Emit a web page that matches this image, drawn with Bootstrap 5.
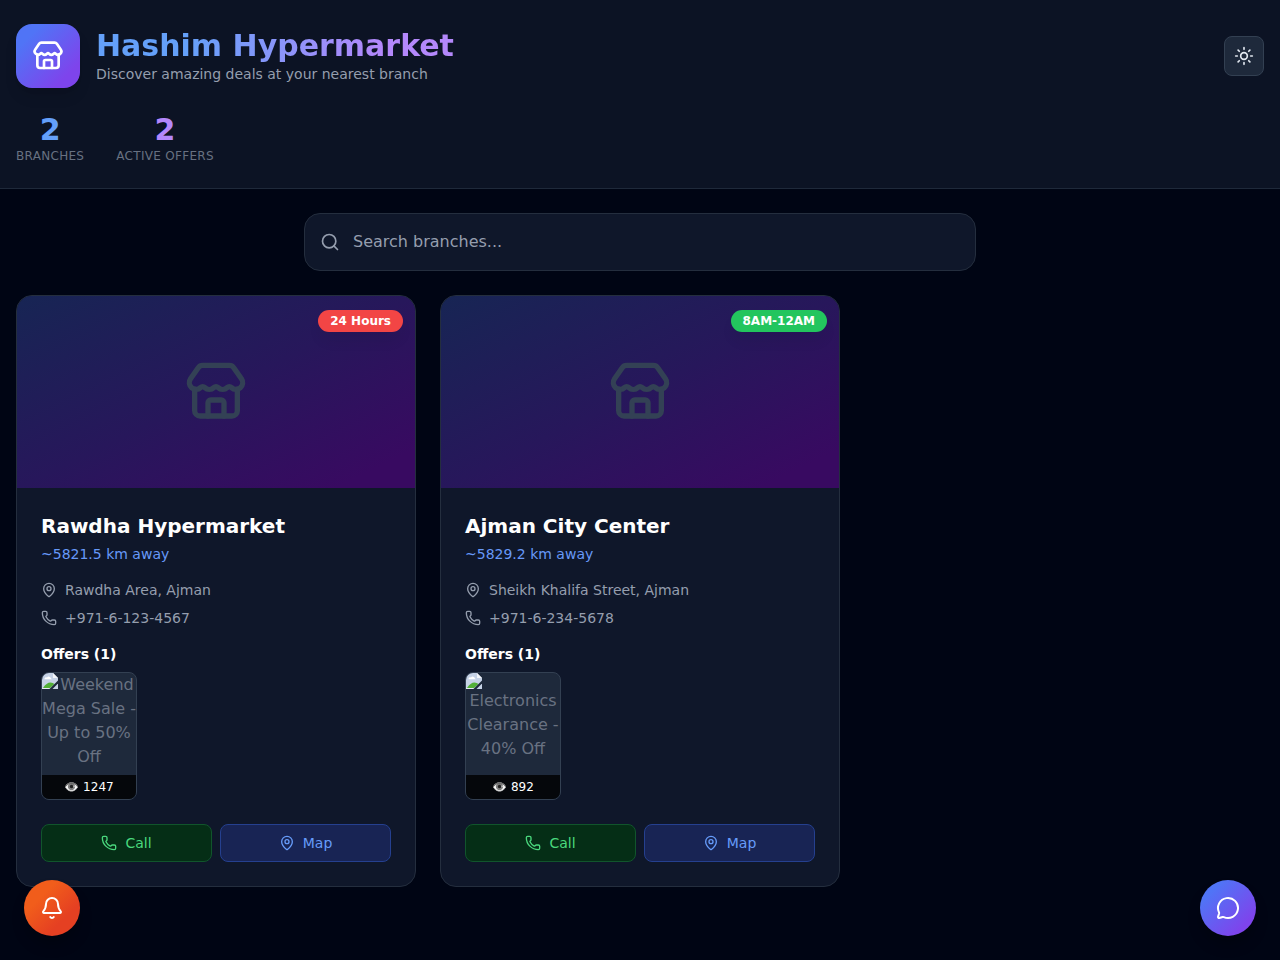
<!DOCTYPE html>
<html lang="en" data-bs-theme="dark">
<head>
<meta charset="utf-8">
<meta name="viewport" content="width=device-width, initial-scale=1">
<title>Hashim Hypermarket</title>
<link href="https://cdn.jsdelivr.net/npm/bootstrap@5.3.0/dist/css/bootstrap.min.css" rel="stylesheet">
<style>
body{font-family:"DejaVu Sans","Noto Color Emoji",sans-serif;background:#000514;color:#fff;line-height:1.5;min-height:100vh}
svg{display:block;flex:none;fill:none;stroke:currentColor;stroke-width:2;stroke-linecap:round;stroke-linejoin:round}
.i16{width:16px;height:16px}.i20{width:20px;height:20px}.i24{width:24px;height:24px}.i32{width:32px;height:32px}.i64{width:64px;height:64px}
.site-head{background:#0c1324;border-bottom:1px solid #1f293a}
.logo{width:64px;height:64px;border-radius:16px;background:linear-gradient(135deg,#5074f6 20%,#7e44ec 80%);box-shadow:0 10px 15px -3px rgba(0,0,0,.12),0 4px 6px -4px rgba(0,0,0,.12)}
.brand-name{font-size:30px;line-height:36px;font-weight:700;background:linear-gradient(90deg,#64a0f9 25%,#b488fb 80%);-webkit-background-clip:text;background-clip:text;color:transparent}
.t14{font-size:14px;line-height:20px}
.t12{font-size:12px;line-height:16px}
.muted{color:#959eae}
.theme-btn{width:40px;height:40px;border-radius:8px;background:#1e293b;border:1px solid #334052;color:#e2e8f0}
.stat-num{font-size:30px;line-height:36px;font-weight:700}
.stat-branches{color:#649ffa}.stat-offers{color:#b488fc}
.stat-label{letter-spacing:.3px;color:#687181}
.search-box{max-width:672px;height:58px;border-radius:16px;background:#0f172a;border:1px solid #242e3e;color:#959eae}
.search-box svg{margin-left:-1px;margin-right:13px}
.search-box input,.search-box input:focus{background:none;border:0;box-shadow:none;padding:0;color:#fff;font-size:16px}
.search-box input::placeholder{color:#959eae;opacity:1}
.branch-grid{display:grid;grid-template-columns:repeat(3,1fr);gap:24px}
.branch{background:#0f172a;border:1px solid #242e3e;border-radius:16px;overflow:hidden;color:#fff}
.banner{height:192px;background:linear-gradient(to bottom right,#172554,#27175b 50%,#380a61 90%);color:#334155}
.hours{top:14px;right:12px;font-size:12px;line-height:16px;padding:3px 12px;border-radius:11px;font-weight:700;color:#fff;box-shadow:0 10px 15px -3px rgba(0,0,0,.08)}
.open-all{background:#f24545}.open-day{background:#23c55e}
.branch-name{font-size:20px;line-height:28px;font-weight:700}
.distance{color:#6799f8}
.offer{width:96px;height:128px;border-radius:8px;background:#1e293b;border:1px solid #334052;color:#697282}
.offer-alt{font-size:16px;line-height:24px;height:102px}
.views{background:#05070b;color:#fff;padding:4px 0;height:24px}
.eye{filter:grayscale(1)}
.act{flex:1 1 0;height:38px;border-radius:8px;border:1px solid}
.act-call{background:#052e16;border-color:#11552c;color:#4ad87d}
.act-map{background:#182454;border-color:#25408f;color:#669bf9}
.fab{width:56px;height:56px;bottom:24px;color:#fff;box-shadow:0 10px 15px -3px rgba(0,0,0,.3)}
.fab-bell{left:24px;background:linear-gradient(135deg,#f15d1b 30%,#e54022 70%)}
.fab-chat{right:24px;background:linear-gradient(135deg,#5074f6 20%,#7e44ec 80%)}
</style>
</head>
<body>
<svg width="0" height="0" class="d-none">
  <symbol id="store" viewBox="0 0 24 24"><path d="M15 21v-5a1 1 0 0 0-1-1h-4a1 1 0 0 0-1 1v5"/><path d="M17.774 10.31a1.12 1.12 0 0 0-1.549 0 2.5 2.5 0 0 1-3.451 0 1.12 1.12 0 0 0-1.548 0 2.5 2.5 0 0 1-3.452 0 1.12 1.12 0 0 0-1.549 0 2.5 2.5 0 0 1-3.77-3.248l2.889-4.184A2 2 0 0 1 7 2h10a2 2 0 0 1 1.653.873l2.895 4.192a2.5 2.5 0 0 1-3.774 3.244"/><path d="M4 10.95V19a2 2 0 0 0 2 2h12a2 2 0 0 0 2-2v-8.05"/></symbol>
  <symbol id="pin" viewBox="0 0 24 24"><path d="M20 10c0 4.993-5.539 10.193-7.399 11.799a1 1 0 0 1-1.202 0C9.539 20.193 4 14.993 4 10a8 8 0 0 1 16 0"/><circle cx="12" cy="10" r="3"/></symbol>
  <symbol id="phone" viewBox="0 0 24 24"><path d="M13.832 16.568a1 1 0 0 0 1.213-.303l.355-.465A2 2 0 0 1 17 15h3a2 2 0 0 1 2 2v3a2 2 0 0 1-2 2A18 18 0 0 1 2 4a2 2 0 0 1 2-2h3a2 2 0 0 1 2 2v3a2 2 0 0 1-.8 1.6l-.468.351a1 1 0 0 0-.292 1.233 14 14 0 0 0 6.392 6.384"/></symbol>
  <symbol id="broken" viewBox="0 0 16 16"><g stroke="none"><path d="M0 0h11l5 5v11H0z" fill="#c6d2e6"/><path d="M2.500 6a1.700 1.700 0 0 1 2.500-1.600 2.200 2.200 0 0 1 3.900 1q.8.1.8.900H2.500z" fill="#fff"/><path d="M1 15q3.500-5.500 7.500-5.500 2.500 0 4 1.500L8 15z" fill="#52b037"/><path d="M0 15h8l-1 1H0z" fill="#e6ecf5"/><path d="M16 7.500v3L10.500 16H7.500z" fill="#1e293b"/><path d="M11 0l5 5h-5z" fill="#f4f6fa"/></g></symbol>
</svg>

<header class="site-head px-3 py-4">
  <div class="d-flex align-items-center justify-content-between">
    <div class="d-flex align-items-center gap-3">
      <div class="logo d-flex align-items-center justify-content-center"><svg class="i32"><use href="#store"/></svg></div>
      <div>
        <h1 class="brand-name mb-0">Hashim Hypermarket</h1>
        <p class="t14 muted mb-0">Discover amazing deals at your nearest branch</p>
      </div>
    </div>
    <button class="theme-btn d-flex align-items-center justify-content-center p-0" aria-label="Toggle theme">
      <svg class="i20" viewBox="0 0 24 24"><circle cx="12" cy="12" r="4"/><path d="M12 2v2M12 20v2M4.930 4.930l1.410 1.410M17.660 17.660l1.410 1.410M2 12h2M20 12h2M6.340 17.660l-1.410 1.410M19.070 4.930l-1.410 1.410"/></svg>
    </button>
  </div>
  <div class="d-flex mt-4 text-center">
    <div class="me-3"><div class="stat-num stat-branches">2</div><div class="t12 stat-label text-uppercase">Branches</div></div>
    <div class="ms-3"><div class="stat-num stat-offers">2</div><div class="t12 stat-label text-uppercase">Active Offers</div></div>
  </div>
</header>

<main class="px-3 py-4">
  <div class="search-box d-flex align-items-center mx-auto mb-4 px-3">
    <svg class="i20" viewBox="0 0 24 24"><path d="m21 21-4.340-4.340"/><circle cx="11" cy="11" r="8"/></svg>
    <input class="form-control" type="text" placeholder="Search branches...">
  </div>

  <div class="branch-grid">
    <article class="branch">
      <div class="banner position-relative d-flex align-items-center justify-content-center">
        <svg class="i64"><use href="#store"/></svg>
        <span class="hours open-all position-absolute">24 Hours</span>
      </div>
      <div class="p-4">
        <h2 class="branch-name mb-1">Rawdha Hypermarket</h2>
        <p class="t14 distance mb-3">~5821.5 km away</p>
        <div class="t14 muted d-flex align-items-center gap-2 mb-2"><svg class="i16"><use href="#pin"/></svg>Rawdha Area, Ajman</div>
        <div class="t14 muted d-flex align-items-center gap-2 mb-3"><svg class="i16"><use href="#phone"/></svg>+971-6-123-4567</div>
        <h3 class="t14 fw-bold mb-2">Offers (1)</h3>
        <div class="offer overflow-hidden mb-4 text-center">
          <div class="offer-alt"><svg class="i16 float-start"><use href="#broken"/></svg>Weekend Mega Sale - Up to 50% Off</div>
          <div class="views t12"><span class="eye">👁️</span> 1247</div>
        </div>
        <div class="d-flex gap-2">
          <a class="btn act act-call t14 p-0 d-flex align-items-center justify-content-center gap-2"><svg class="i16"><use href="#phone"/></svg>Call</a>
          <a class="btn act act-map t14 p-0 d-flex align-items-center justify-content-center gap-2"><svg class="i16"><use href="#pin"/></svg>Map</a>
        </div>
      </div>
    </article>

    <article class="branch">
      <div class="banner position-relative d-flex align-items-center justify-content-center">
        <svg class="i64"><use href="#store"/></svg>
        <span class="hours open-day position-absolute">8AM-12AM</span>
      </div>
      <div class="p-4">
        <h2 class="branch-name mb-1">Ajman City Center</h2>
        <p class="t14 distance mb-3">~5829.2 km away</p>
        <div class="t14 muted d-flex align-items-center gap-2 mb-2"><svg class="i16"><use href="#pin"/></svg>Sheikh Khalifa Street, Ajman</div>
        <div class="t14 muted d-flex align-items-center gap-2 mb-3"><svg class="i16"><use href="#phone"/></svg>+971-6-234-5678</div>
        <h3 class="t14 fw-bold mb-2">Offers (1)</h3>
        <div class="offer overflow-hidden mb-4 text-center">
          <div class="offer-alt"><svg class="i16 float-start"><use href="#broken"/></svg>Electronics Clearance - 40% Off</div>
          <div class="views t12"><span class="eye">👁️</span> 892</div>
        </div>
        <div class="d-flex gap-2">
          <a class="btn act act-call t14 p-0 d-flex align-items-center justify-content-center gap-2"><svg class="i16"><use href="#phone"/></svg>Call</a>
          <a class="btn act act-map t14 p-0 d-flex align-items-center justify-content-center gap-2"><svg class="i16"><use href="#pin"/></svg>Map</a>
        </div>
      </div>
    </article>
  </div>
</main>

<button class="fab fab-bell position-fixed rounded-circle border-0 p-0 d-flex align-items-center justify-content-center" aria-label="Notifications">
  <svg class="i24" viewBox="0 0 24 24"><path d="M10.268 21a2 2 0 0 0 3.464 0"/><path d="M3.262 15.326A1 1 0 0 0 4 17h16a1 1 0 0 0 .740-1.673C19.410 13.956 18 12.499 18 8A6 6 0 0 0 6 8c0 4.499-1.411 5.956-2.738 7.326"/></svg>
</button>
<button class="fab fab-chat position-fixed rounded-circle border-0 p-0 d-flex align-items-center justify-content-center" aria-label="Chat">
  <svg class="i24" viewBox="0 0 24 24"><path d="M2.992 16.342a2 2 0 0 1 .094 1.167l-1.065 3.290a1 1 0 0 0 1.236 1.168l3.413-.998a2 2 0 0 1 1.099.092 10 10 0 1 0-4.777-4.719"/></svg>
</button>
<script src="https://cdn.jsdelivr.net/npm/bootstrap@5.3.0/dist/js/bootstrap.bundle.min.js"></script>
</body>
</html>
